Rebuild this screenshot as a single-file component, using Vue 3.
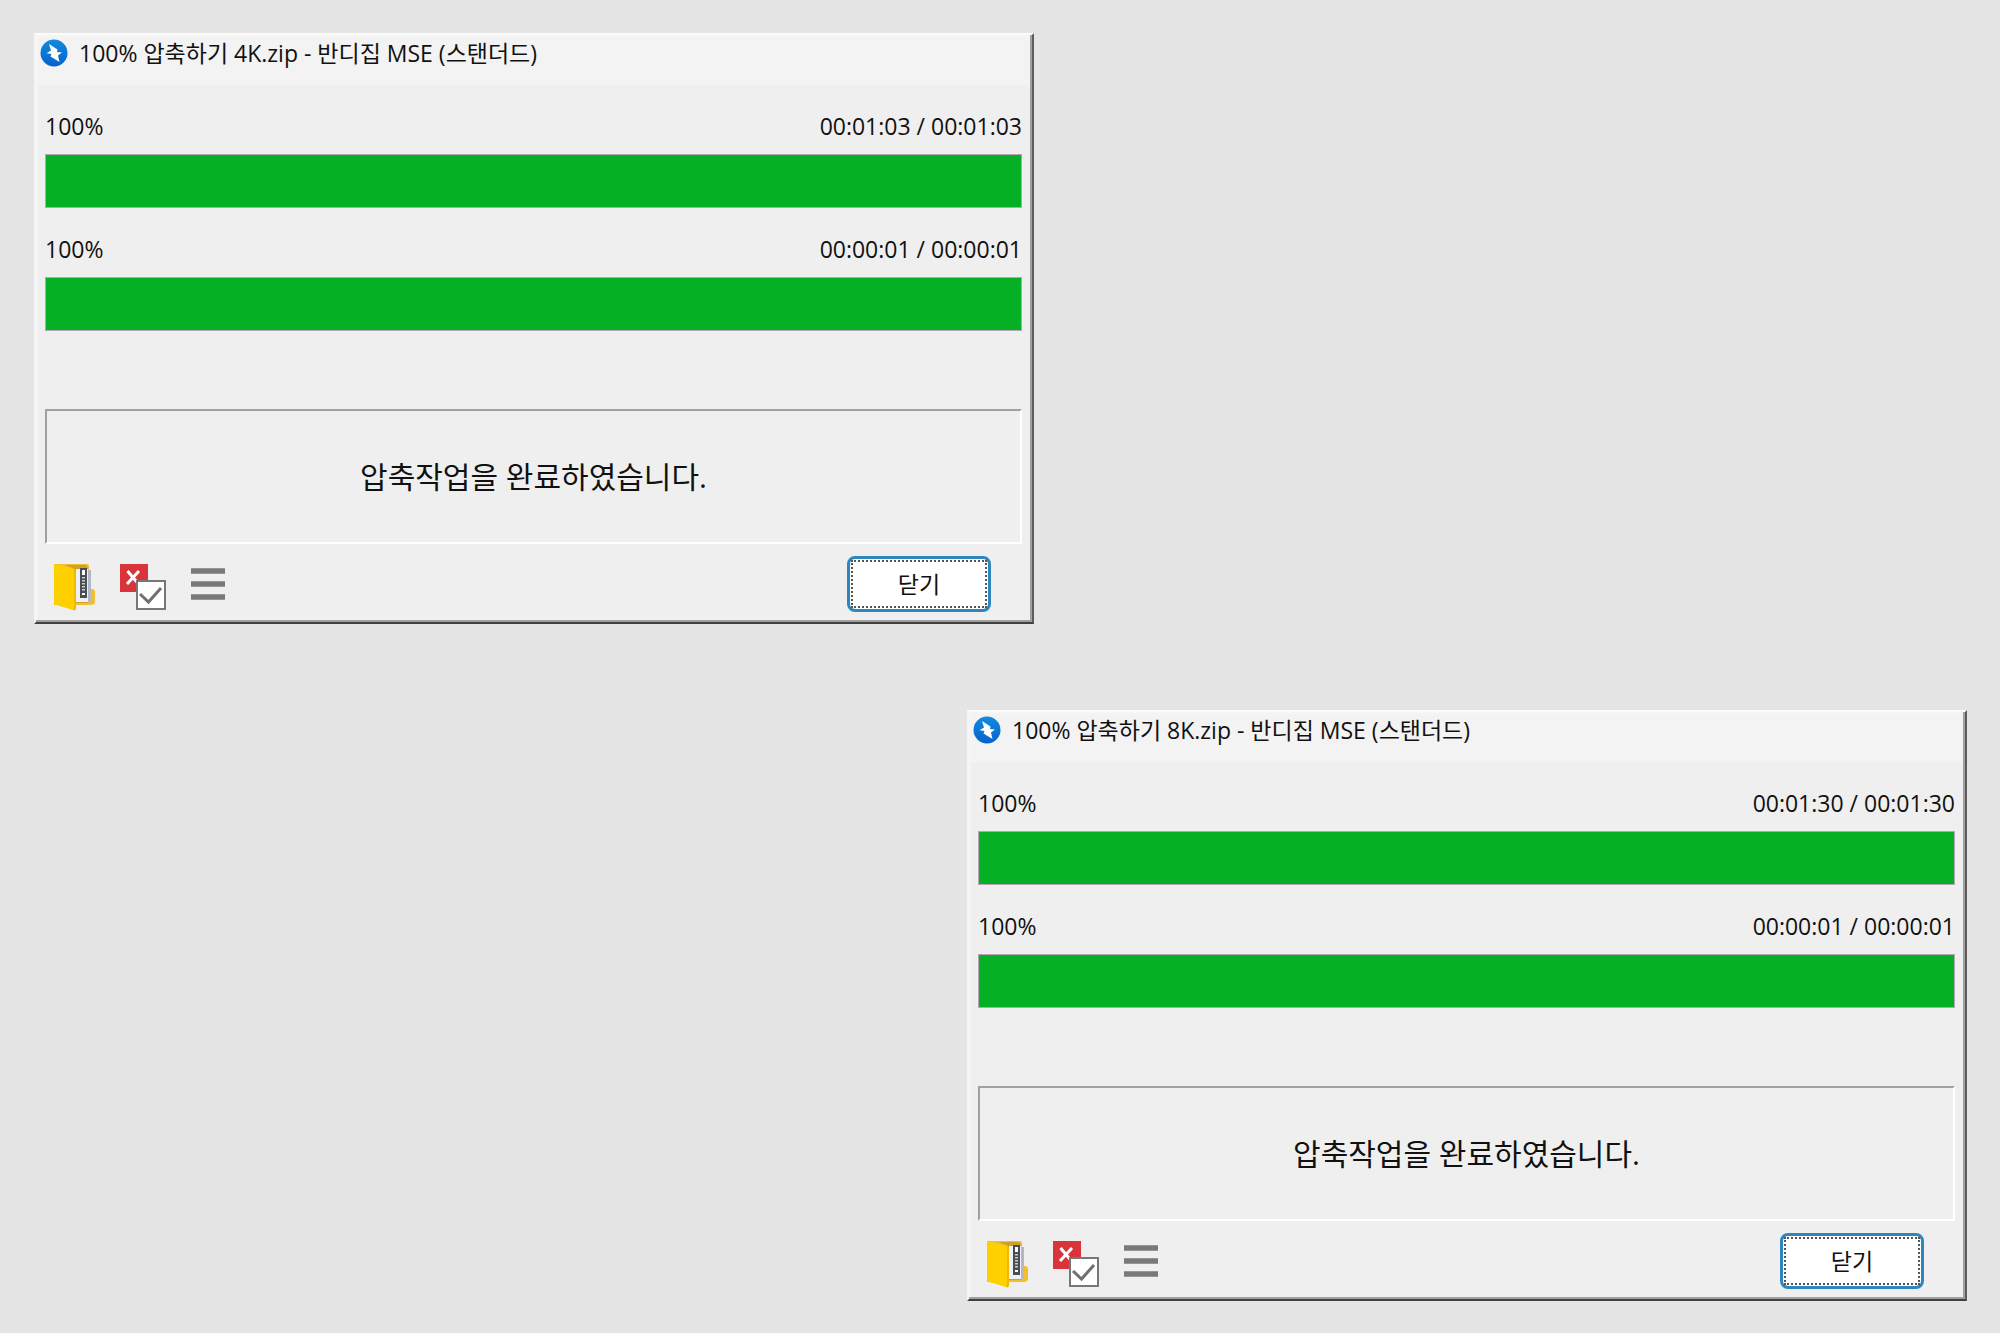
<template>
  <div class="desktop">
    <section v-for="job in jobs" :key="job.file" class="window" :aria-label="job.file">
      <header class="title-bar">
        <svg class="logo" viewBox="0 0 28 28" aria-hidden="true">
          <defs>
            <linearGradient id="logo-fill" x1="0" y1="0" x2="0" y2="1">
              <stop offset="0" stop-color="#1289e0" />
              <stop offset="1" stop-color="#0663cc" />
            </linearGradient>
          </defs>
          <circle cx="14" cy="14" r="13.5" fill="url(#logo-fill)" />
          <path d="M9 5 L17.5 10.5 L17 13 L22 13.5 L18 16.5 L19.5 23 L10.5 17.5 L11.5 15 L6.5 14.3 L11 11.5 Z" fill="#fff" />
        </svg>
        <h1>100% 압축하기 {{ job.file }} - 반디집 MSE (스탠더드)</h1>
      </header>

      <main class="content">
        <div v-for="(row, i) in job.rows" :key="i" class="row">
          <div class="row-text">
            <label :for="`${job.file}-${i}`">{{ row.percent }}%</label>
            <span>{{ row.elapsed }} / {{ row.total }}</span>
          </div>
          <progress :id="`${job.file}-${i}`" class="bar" :value="row.percent" max="100"></progress>
        </div>
        <p class="message">압축작업을 완료하였습니다.</p>
      </main>

      <footer class="toolbar">
        <button class="tool" type="button" aria-label="폴더 열기">
          <svg width="42" height="48" viewBox="0 0 42 48">
            <path d="M1 1 H34 Q36 1 36 3 V26 H39 Q42 26 42 29 V38 Q42 42 38 42 H22 L1 42 Z" fill="#f0c030" />
            <path d="M12 2 H33 L35 5 V40 H22 V6 Z" fill="#cfa222" />
            <path d="M23 6 H35 V39 H23 Z" fill="#eef0f6" />
            <path d="M35 7 H38 V38 L35 40 Z" fill="#b4b8c6" />
            <path d="M27 5 H34 V35 H27 Z" fill="#4a4d52" />
            <path d="M29 7 H32 V12 H29 Z M29 30 H32 V32 H29 Z" fill="#fff" />
            <path d="M30.5 14 V29" stroke="#c8ccd4" stroke-width="3" stroke-dasharray="1.5 1.5" />
            <path d="M1 1 L20 6 Q23 7 23 10 V45 Q23 48 20 47 L3 42 Q1 41 1 39 Z" fill="#ffd000" />
            <path d="M20 6 Q23 7 23 10 V45 Q23 48 20 47 Q21 45 21 42 V10 Q21 8 20 6 Z" fill="#f0b800" />
          </svg>
        </button>
        <button class="tool" type="button" aria-label="완료 후 창 닫기">
          <svg width="48" height="48" viewBox="0 0 48 48">
            <rect x="1" y="1" width="28" height="28" fill="#d9343a" />
            <path d="M8.5 8 L19.5 21 M20 8 L8 21" stroke="#fff" stroke-width="3" />
            <rect x="18" y="18" width="28" height="28" fill="#fff" stroke="#777" stroke-width="2" />
            <path d="M21 31 L29.5 39 L42 25" fill="none" stroke="#707070" stroke-width="3" />
          </svg>
        </button>
        <button class="tool" type="button" aria-label="메뉴">
          <svg width="34" height="34" viewBox="0 0 34 34">
            <path d="M0 4 H34 M0 17 H34 M0 30 H34" stroke="#797979" stroke-width="5.5" />
          </svg>
        </button>
        <button class="close" type="button"><span>닫기</span></button>
      </footer>
    </section>
  </div>
</template>

<script setup>
const jobs = [
  {
    file: '4K.zip',
    rows: [
      { percent: 100, elapsed: '00:01:03', total: '00:01:03' },
      { percent: 100, elapsed: '00:00:01', total: '00:00:01' }
    ]
  },
  {
    file: '8K.zip',
    rows: [
      { percent: 100, elapsed: '00:01:30', total: '00:01:30' },
      { percent: 100, elapsed: '00:00:01', total: '00:00:01' }
    ]
  }
]
</script>

<style>
body {
  margin: 0;
  background: #e5e5e5;
}
</style>

<style scoped>
.desktop {
  box-sizing: border-box;
  min-height: 100vh;
  display: flex;
  flex-direction: column;
  justify-content: space-between;
  gap: 24px;
  padding: 33px 33px 32px 34px;
  background: #e5e5e5;
  color: #111;
  font-family: 'Open Sans', 'Noto Sans CJK KR', sans-serif;
  font-size: 23px;
  line-height: 32px;
}

.window {
  box-sizing: border-box;
  width: 50vw;
  padding: 2px;
  background: #efefef;
  border: 2px solid;
  border-color: #fbfbfb #5c5c5c #404040 #f5f5f5;
  box-shadow: inset -2px -2px #a0a0a0, inset 2px 2px #f5f5f5;
}

.window:last-child {
  align-self: flex-end;
}

.title-bar {
  display: flex;
  align-items: center;
  gap: 11px;
  height: 32px;
  padding: 0 0 16px 2px;
  background: #f3f3f3;
}

.logo {
  width: 28px;
  height: 28px;
}

.title-bar h1 {
  margin: 0;
  font-size: 23px;
  font-weight: 400;
  white-space: nowrap;
}

.content {
  padding: 0 8px 0 7px;
}

.row {
  padding-top: 25px;
}

.row-text {
  display: flex;
  justify-content: space-between;
  margin-bottom: 12px;
}

.bar {
  appearance: none;
  box-sizing: border-box;
  display: block;
  width: 100%;
  height: 54px;
  border: 1px solid #b5a5b5;
  background: #e6e6e6;
}

.bar::-webkit-progress-bar {
  background: #e6e6e6;
}

.bar::-webkit-progress-value {
  background: #06b025;
}

.message {
  display: flex;
  align-items: center;
  justify-content: center;
  box-sizing: border-box;
  height: 135px;
  margin: 78px 0 0;
  border: 2px solid;
  border-color: #a0a0a0 #fff #fff #a0a0a0;
  font-size: 30px;
}

.toolbar {
  display: flex;
  align-items: center;
  gap: 24px;
  height: 56px;
  padding: 12px 39px 8px 15px;
}

.tool {
  display: flex;
  padding: 6px 0 0;
  border: 0;
  background: none;
}

.tool:nth-child(3) {
  padding: 0;
}

.close {
  width: 144px;
  height: 56px;
  margin-left: auto;
  padding: 1px;
  border: 3px solid #2f86bd;
  border-radius: 8px;
  background: #fff;
  color: #111;
  font: inherit;
}

.close span {
  display: flex;
  align-items: center;
  justify-content: center;
  box-sizing: border-box;
  height: 100%;
  border: 2px dotted #555;
}
</style>
